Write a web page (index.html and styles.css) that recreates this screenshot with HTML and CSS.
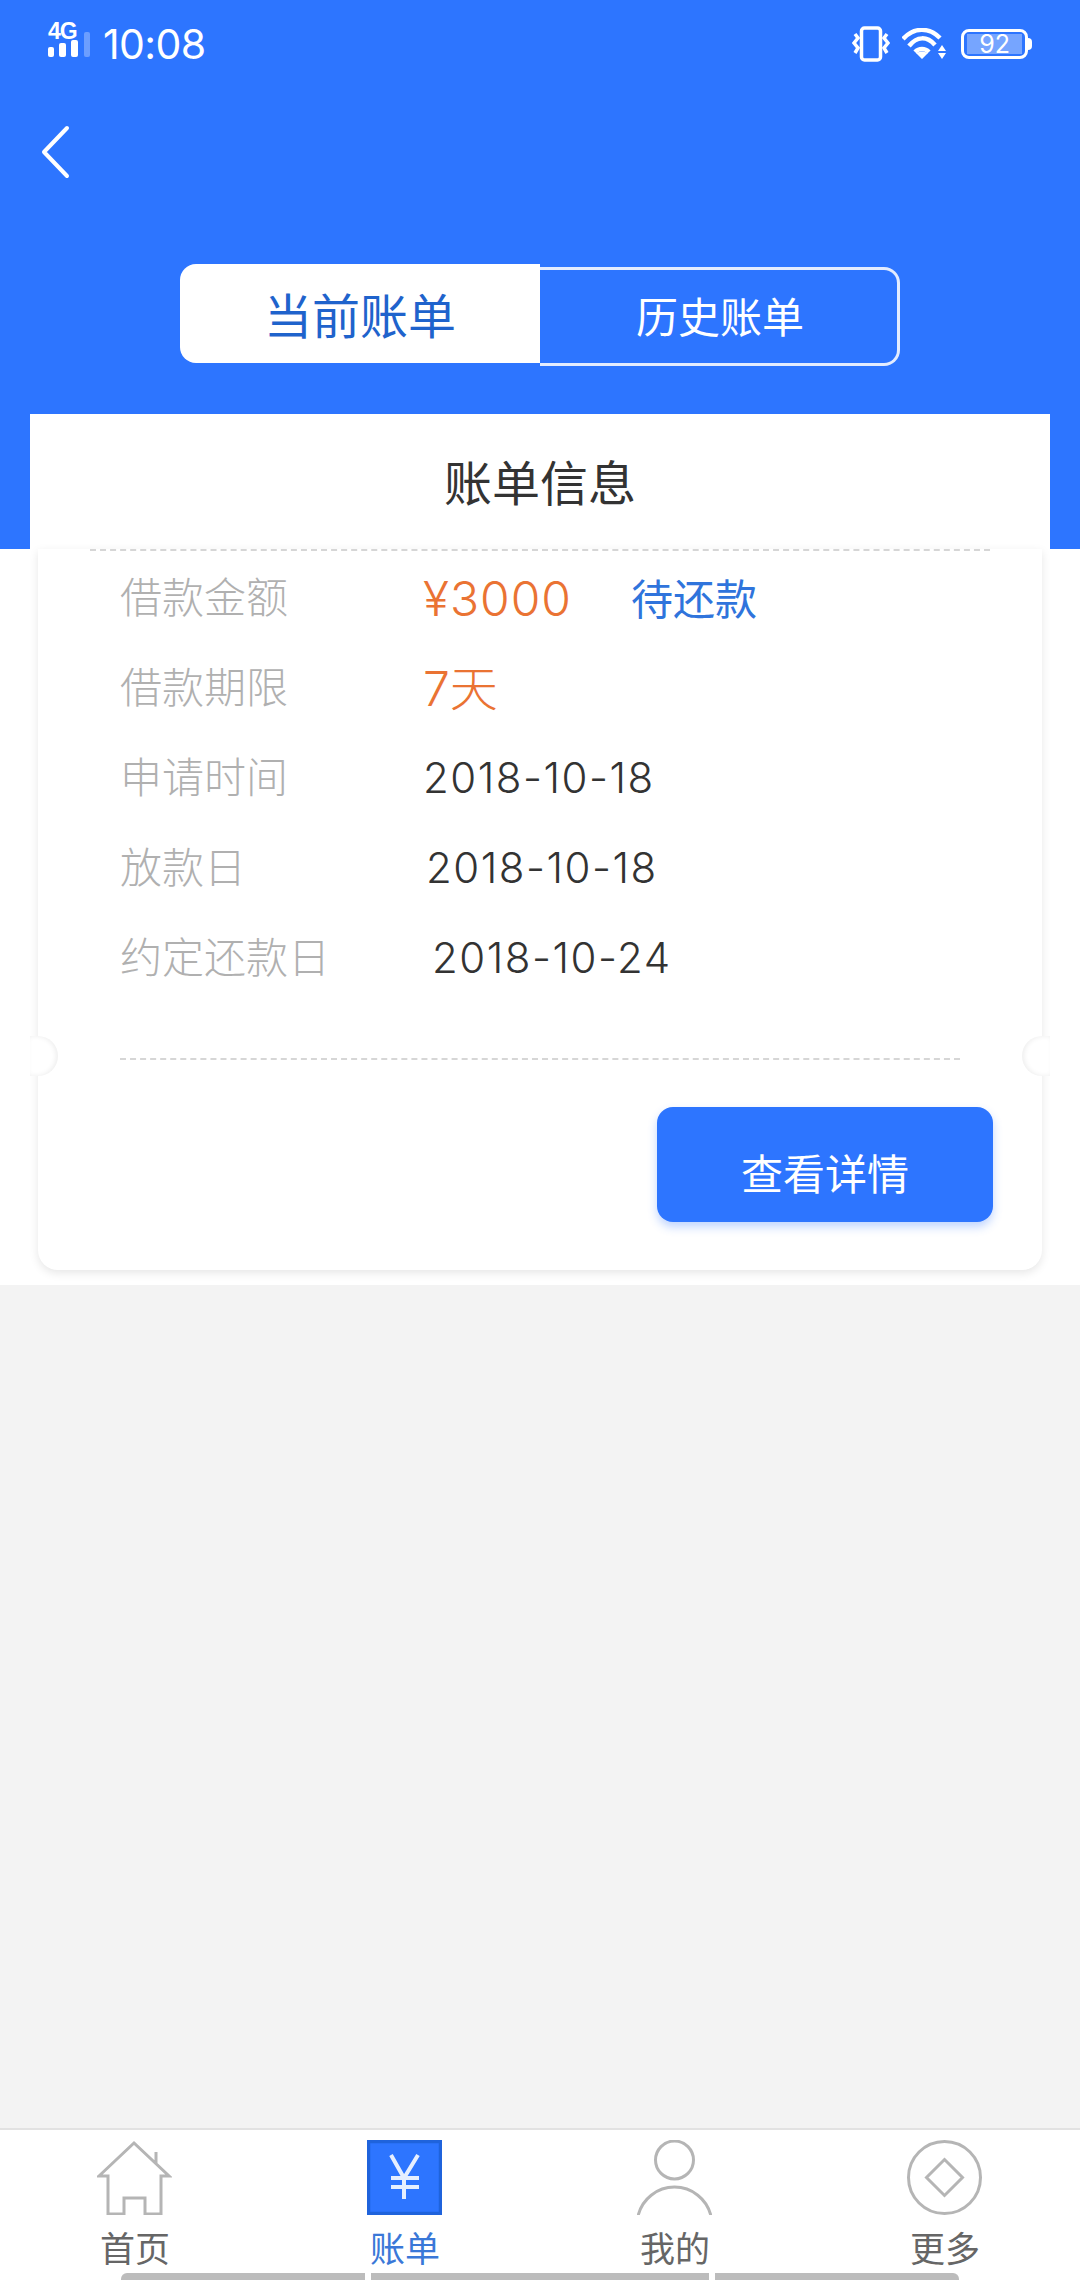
FILE: index.html
```html
<!DOCTYPE html>
<html lang="zh-CN">
<head>
<meta charset="utf-8">
<title>账单信息</title>
<link rel="stylesheet" href="styles.css">
</head>
<body>
<div class="page">
  <header class="header">
    <div class="status">
      <div class="status-left">
        <div class="signal">
          <span class="net">4G</span>
          <svg class="bars" width="42" height="25" viewBox="0 0 42 25"><rect x="0" y="15" width="6" height="10" rx="2" fill="#fff"/><rect x="11" y="11" width="7" height="14" rx="2" fill="#fff"/><rect x="23" y="8" width="7" height="17" rx="2" fill="#fff"/><rect x="36" y="0" width="6" height="25" rx="2" fill="#fff" opacity=".3"/></svg>
        </div>
        <span class="time">10:08</span>
      </div>
      <div class="status-right">
        <svg class="vib" width="38" height="36" viewBox="0 0 38 36"><rect x="9.500" y="2" width="19" height="32" rx="3" fill="none" stroke="#fff" stroke-width="3.500"/><path d="M3 8l3 4-4 5 4 5-3 5M35 8l-3 4 4 5-4 5 3 5" fill="none" stroke="#fff" stroke-width="3.500"/></svg>
        <svg class="wifi" width="44" height="32" viewBox="0 0 44 32"><path d="M1 11C12-1 27-1 38 10M7 18C15 8 25 8 33 17M13 24c4-4 10-4 14 0" fill="none" stroke="#fff" stroke-width="4.500"/><path d="M20 31l-6-6c4-2 8-2 12 0zM40 17l4 6h-8zM36 25h8l-4 6z" fill="#fff"/></svg>
        <div class="battery"><div class="battery-fill">92</div></div>
        <div class="battery-tip"></div>
      </div>
    </div>
    <div class="nav">
      <svg class="back" width="30" height="54" viewBox="0 0 30 54"><path d="M26 3L3 27l23 24" fill="none" stroke="#fff" stroke-width="4" stroke-linecap="round" stroke-linejoin="round"/></svg>
    </div>
    <div class="tabs">
      <div class="tab tab-on">当前账单</div>
      <div class="tab tab-off">历史账单</div>
    </div>
    <div class="panel">账单信息</div>
  </header>

  <section class="sheet">
    <div class="card">
      <div class="dash dash-top"></div>
      <div class="row"><span class="label">借款金额</span><span class="value amount money">¥3000</span><span class="state">待还款</span></div>
      <div class="row"><span class="label">借款期限</span><span class="value amount term">7天</span></div>
      <div class="row"><span class="label">申请时间</span><span class="value date">2018-10-18</span></div>
      <div class="row"><span class="label">放款日</span><span class="value date shift-s">2018-10-18</span></div>
      <div class="row"><span class="label">约定还款日</span><span class="value date shift-l">2018-10-24</span></div>
      <div class="dash dash-bottom"></div>
      <i class="notch notch-l"></i>
      <i class="notch notch-r"></i>
      <div class="actions"><div class="button">查看详情</div></div>
    </div>
  </section>

  <main class="empty"></main>

  <footer class="tabbar">
    <nav class="items">
      <div class="item">
        <svg class="icon" width="75" height="75" viewBox="0 0 75 75"><path d="M2 36L37 3l35 33h-8v38H48V58H27v16H11V36zM59 24V12" fill="none" stroke="#b5b5b5" stroke-width="3"/></svg>
        <span>首页</span>
      </div>
      <div class="item item-on">
        <svg class="icon" width="75" height="75" viewBox="0 0 75 75"><rect x="1.500" y="1.500" width="72" height="72" fill="#2d75ff" stroke="#1f63dc" stroke-width="3.500"/><path d="M24 15l13 23 14-23M37 38v21M24 38h28M24 47h28" fill="none" stroke="#e6efff" stroke-width="4"/></svg>
        <span>账单</span>
      </div>
      <div class="item">
        <svg class="icon" width="75" height="75" viewBox="0 0 75 75"><circle cx="37.500" cy="20" r="19" fill="none" stroke="#b5b5b5" stroke-width="3"/><path d="M1 76A37.500 37.500 0 0 1 74 76" fill="none" stroke="#b5b5b5" stroke-width="3"/></svg>
        <span>我的</span>
      </div>
      <div class="item">
        <svg class="icon" width="75" height="75" viewBox="0 0 75 75"><circle cx="37.500" cy="37.500" r="36" fill="none" stroke="#b5b5b5" stroke-width="3"/><path d="M37.500 19.500l18 18-18 18-18-18z" fill="none" stroke="#b5b5b5" stroke-width="3"/></svg>
        <span>更多</span>
      </div>
    </nav>
    <div class="gesture"><b class="g-side g-l"></b><b class="g-mid"></b><b class="g-side g-r"></b></div>
  </footer>
</div>
</body>
</html>
```
FILE: styles.css
```css
* { box-sizing: border-box; }
html, body { margin: 0; padding: 0; }
body { font-family: "Inter", "Noto Sans CJK SC", sans-serif; font-weight: 400; color: #333; }
.page { width: 1080px; height: 2280px; display: flex; flex-direction: column; background: #f3f3f3; overflow: hidden; }

.header { height: 549px; background: #2d75ff; flex: none; display: flex; flex-direction: column; }
.status { height: 88px; padding: 0 48px; display: flex; justify-content: space-between; align-items: center; color: #fff; }
.status-left { display: flex; align-items: center; }
.signal { width: 42px; height: 36px; display: flex; flex-direction: column; position: relative; margin-top: -6px; }
.net { font-family: "Liberation Sans", sans-serif; font-weight: 700; font-size: 23px; line-height: 17px; letter-spacing: -1px; }
.bars { position: absolute; left: 0; top: 9px; }
.time { font-size: 41px; line-height: 50px; margin-left: 13px; font-weight: 400; letter-spacing: -.6px; }
.status-right { display: flex; align-items: center; }
.vib { margin-right: 12px; }
.wifi { margin-right: 15px; }
.battery { width: 67px; height: 30px; border: 3px solid #fff; border-radius: 8px; padding: 2px 3px; }
.battery-fill { width: 100%; height: 100%; background: rgba(255,255,255,.35); font-size: 25px; line-height: 20px; text-align: center; }
.battery-tip { width: 4px; height: 12px; background: #fff; border-radius: 0 4px 4px 0; }

.nav { height: 176px; padding: 37px 0 0 41px; }
.back { display: block; }

.tabs { height: 102px; padding-left: 180px; display: flex; align-items: flex-start; font-family: "Noto Sans CJK SC", sans-serif; }
.tab { width: 360px; height: 99px; display: flex; justify-content: center; align-items: center; }
.tab-on { background: #fff; border-radius: 16px 0 0 16px; color: #1f63cc; font-size: 48px; font-weight: 400; padding-bottom: 2px; }
.tab-off { margin-top: 3px; border: 3px solid #e3ecff; border-left: 0; border-radius: 0 16px 16px 0; color: #fff; font-size: 42px; font-weight: 400; padding: 0 0 5px 3px; }

.panel { width: 1020px; height: 135px; margin: 48px 0 0 30px; padding-bottom: 3px; background: #fff; display: flex; justify-content: center; align-items: center; font-family: "Noto Sans CJK SC", sans-serif; font-size: 48px; font-weight: 400; color: #333; }

.sheet { height: 736px; flex: none; padding: 0 38px 15px; background: #fff; }
.card { height: 721px; position: relative; background: #fff; border-radius: 0 0 20px 20px; box-shadow: 0 3px 10px rgba(0,0,0,.1); }
.dash { border-top: 2px dashed #d6d6d6; }
.dash-top { margin: 0 52px; }
.row { height: 90px; padding-left: 82px; display: flex; align-items: center; font-size: 42px; }
.label { width: 303px; flex: none; margin-bottom: 3px; color: #b0b0b0; font-family: "Noto Sans CJK SC", sans-serif; font-weight: 300; }
.value { color: #333; }
.date { margin-top: 3px; letter-spacing: 1.500px; font-weight: 350; }
.amount { color: #ea7333; font-size: 48px; font-family: "Inter", "Noto Sans CJK SC", sans-serif; }
.money { margin-top: 5px; letter-spacing: 1px; font-weight: 350; }
.term { margin-bottom: 2px; font-weight: 300; }
.state { margin-left: 59px; color: #2f74dc; font-family: "Noto Sans CJK SC", sans-serif; font-weight: 400; }
.shift-s { margin-left: 3px; }
.shift-l { margin-left: 9px; }
.dash-bottom { margin: 57px 82px 0; }
.notch { position: absolute; top: 487px; width: 28px; height: 40px; background: #fff; }
.notch-l { left: -8px; border-radius: 0 20px 20px 0; box-shadow: inset -2px 0 5px rgba(0,0,0,.07); }
.notch-r { right: -8px; border-radius: 20px 0 0 20px; box-shadow: inset 2px 0 5px rgba(0,0,0,.07); }
.actions { padding: 47px 49px 0 0; display: flex; justify-content: flex-end; }
.button { width: 336px; height: 115px; border-radius: 16px; background: #2d75ff; color: #fff; box-shadow: 0 5px 10px rgba(45,117,255,.3); display: flex; justify-content: center; align-items: center; padding-top: 13px; font-family: "Noto Sans CJK SC", sans-serif; font-size: 42px; font-weight: 400; }

.empty { flex: 1; }

.tabbar { height: 152px; flex: none; background: #fff; border-top: 2px solid #e2e2e2; display: flex; flex-direction: column; }
.items { height: 143px; display: grid; grid-template-columns: repeat(4, 270px); }
.item { display: flex; flex-direction: column; align-items: center; padding-top: 10px; color: #666; font-family: "Noto Sans CJK SC", sans-serif; font-size: 35px; line-height: 44px; }
.item-on { color: #3a78d8; }
.icon { display: block; margin: 0 0 10px -2px; }
.gesture { height: 7px; padding-left: 121px; display: flex; gap: 6px; }
.gesture b { display: block; background: #bcbcbc; }
.g-side { width: 244px; }
.g-mid { width: 338px; }
.g-l { border-radius: 6px 0 0 0; }
.g-r { border-radius: 0 6px 0 0; }
```
